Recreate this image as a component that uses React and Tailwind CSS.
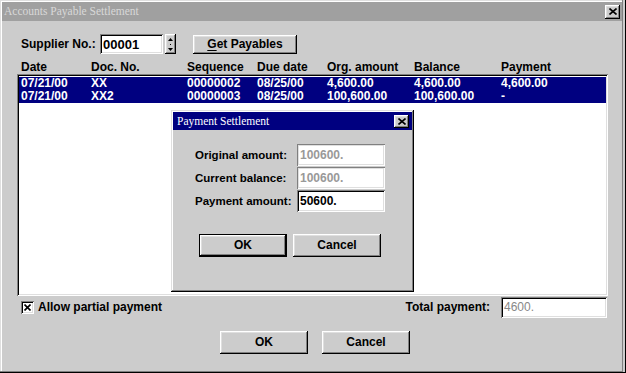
import React from "react";

const BTN =
  "shadow-[inset_-1px_-1px_0_#000,inset_1px_1px_0_#fff,inset_-2px_-2px_0_#808080,inset_2px_2px_0_#dfdfdf]";
const SUNKEN =
  "shadow-[inset_1px_1px_0_#808080,inset_-1px_-1px_0_#fff,inset_2px_2px_0_#000,inset_-2px_-2px_0_#dfdfdf]";
const DISABLED =
  "shadow-[inset_1px_1px_0_#808080,inset_-1px_-1px_0_#fff,inset_2px_2px_0_#dfdfdf,inset_-2px_-2px_0_#dfdfdf]";

function CloseBtn({ w = "w-[15px]", h = "h-[14px]" }) {
  return (
    <div className={`${w} ${h} bg-[#cccccc] ${BTN} flex items-center justify-center`}>
      <svg width="8" height="7" viewBox="0 0 8 7">
        <path d="M0.5 0.5 L7.5 6.5 M7.5 0.5 L0.5 6.5" stroke="#000" strokeWidth="1.6" fill="none" />
      </svg>
    </div>
  );
}

function Btn({ children, def = false }) {
  if (def) {
    return (
      <div className="w-[88px] h-[23px] border border-black bg-[#cccccc]">
        <div className={`w-full h-full ${BTN} flex items-center justify-center`}>{children}</div>
      </div>
    );
  }
  return (
    <div className={`w-[88px] h-[23px] bg-[#cccccc] ${BTN} flex items-center justify-center`}>
      {children}
    </div>
  );
}

function Cells({ cells }) {
  return (
    <>
      <div className="w-[70px] shrink-0">{cells[0]}</div>
      <div className="w-[96px] shrink-0">{cells[1]}</div>
      <div className="w-[70px] shrink-0">{cells[2]}</div>
      <div className="w-[70px] shrink-0">{cells[3]}</div>
      <div className="w-[87px] shrink-0">{cells[4]}</div>
      <div className="w-[87px] shrink-0">{cells[5]}</div>
      <div className="flex-1">{cells[6]}</div>
    </>
  );
}

const rows = [
  ["07/21/00", "XX", "00000002", "08/25/00", "4,600.00", "4,600.00", "4,600.00"],
  ["07/21/00", "XX2", "00000003", "08/25/00", "100,600.00", "100,600.00", "-"],
];

export default function App() {
  return (
    <div className="w-[626px] h-[373px] relative overflow-hidden bg-[#cccccc] pl-[2px] pt-[2px] pr-[4px] pb-[2px] shadow-[inset_-1px_0_0_#000,inset_0_-1px_0_#000,inset_-3px_0_0_#cccccc,inset_-4px_0_0_#808080,inset_0_-2px_0_#808080,inset_1px_1px_0_#dfdfdf,inset_2px_2px_0_#fff] font-['Liberation_Sans',Arial,sans-serif] text-[12px] font-bold leading-[13px] text-black">
      {/* Title bar */}
      <div className="h-[19px] bg-[#a0a0a0] flex items-center justify-between pl-[2px] pr-[2px]">
        <span className="font-['Liberation_Serif','Times_New_Roman',serif] font-normal text-[11.5px] text-[#d8d8d8]">
          Accounts Payable Settlement
        </span>
        <CloseBtn />
      </div>

      <div className="flex flex-col pl-[15px] pr-[14px]">
        {/* Supplier row */}
        <div className="mt-[13px] h-[20px] flex items-center pl-[4px]">
          <div className="w-[79px] shrink-0">Supplier No.:</div>
          <div className={`w-[63px] h-[20px] bg-white ${SUNKEN} flex items-center pl-[3px] text-[13px]`}>
            00001
          </div>
          <div className={`ml-[2px] w-[11px] h-[20px] bg-[#cccccc] ${BTN} flex flex-col items-center justify-center gap-[3px]`}>
            <svg width="5" height="3" viewBox="0 0 5 3">
              <path d="M2.5 0 L5 3 L0 3 Z" fill="#000" />
            </svg>
            <svg width="1" height="1" viewBox="0 0 1 1">
              <rect width="1" height="1" fill="#000" />
            </svg>
            <svg width="5" height="3" viewBox="0 0 5 3">
              <path d="M0 0 L5 0 L2.5 3 Z" fill="#000" />
            </svg>
          </div>
          <div className={`ml-[17px] mt-[1px] self-start w-[104px] h-[19px] bg-[#cccccc] ${BTN} flex items-center justify-center`}>
            <span>
              <span className="underline underline-offset-[2px]">G</span>et Payables
            </span>
          </div>
        </div>

        {/* Header */}
        <div className="mt-[7px] h-[13px] flex pl-[4px]">
          <Cells cells={["Date", "Doc. No.", "Sequence", "Due date", "Org. amount", "Balance", "Payment"]} />
        </div>

        {/* List box */}
        <div className={`w-[591px] h-[222px] bg-white ${SUNKEN} pl-[2px] pr-[2px] pt-[3px]`}>
          {rows.map((r, i) => (
            <div key={i} className="h-[13px] bg-[#000080] text-white flex pl-[2px]">
              <Cells cells={r} />
            </div>
          ))}
        </div>

        {/* Bottom row */}
        <div className="mt-[1px] h-[21px] flex items-center justify-between pl-[4px]">
          <div className="flex items-center">
            <div className={`w-[13px] h-[13px] bg-white ${SUNKEN} flex items-center justify-center`}>
              <svg width="7" height="7" viewBox="0 0 7 7">
                <path d="M0.5 0.5 L6.5 6.5 M6.5 0.5 L0.5 6.5" stroke="#000" strokeWidth="1.6" fill="none" />
              </svg>
            </div>
            <span className="ml-[4px]">Allow partial payment</span>
          </div>
          <div className="flex items-center mr-[1px]">
            <span>Total payment:</span>
            <div className={`ml-[11px] w-[106px] h-[21px] bg-white ${SUNKEN} flex items-center pl-[3px] font-normal text-[#888888]`}>
              4600.
            </div>
          </div>
        </div>

        {/* Bottom buttons */}
        <div className="mt-[13px] flex pl-[203px] gap-[14px]">
          <Btn>OK</Btn>
          <Btn>Cancel</Btn>
        </div>
      </div>

      {/* Payment Settlement dialog */}
      <div className={`absolute left-[171px] top-[110px] w-[243px] h-[182px] bg-[#cccccc] p-[2px] shadow-[inset_-1px_-1px_0_#000,inset_1px_1px_0_#dfdfdf,inset_-2px_-2px_0_#808080,inset_2px_2px_0_#fff]`}>
        <div className="h-[18px] bg-[#000080] flex items-center justify-between pl-[4px] pr-[3px]">
          <span className="font-['Liberation_Serif','Times_New_Roman',serif] font-normal text-[11.5px] text-white">
            Payment Settlement
          </span>
          <CloseBtn w="w-[15px]" h="h-[13px]" />
        </div>
        <div className="flex flex-col pl-[22px] pt-[14px]">
          <div className="h-[22px] mb-[1px] flex items-center">
            <div className="w-[102px] shrink-0 text-[11.5px]">Original amount:</div>
            <div className={`w-[88px] h-[22px] bg-white ${DISABLED} flex items-center pl-[3px] text-[#999999]`}>
              100600.
            </div>
          </div>
          <div className="h-[22px] mb-[1px] flex items-center">
            <div className="w-[102px] shrink-0 text-[11.5px]">Current balance:</div>
            <div className={`w-[88px] h-[22px] bg-white ${DISABLED} flex items-center pl-[3px] text-[#999999]`}>
              100600.
            </div>
          </div>
          <div className="h-[22px] flex items-center">
            <div className="w-[102px] shrink-0 text-[11.5px]">Payment amount:</div>
            <div className={`w-[88px] h-[22px] bg-white ${SUNKEN} flex items-center pl-[3px]`}>
              50600.
            </div>
          </div>
          <div className="mt-[22px] flex pl-[4px] gap-[6px]">
            <Btn def>OK</Btn>
            <Btn>Cancel</Btn>
          </div>
        </div>
      </div>
    </div>
  );
}
